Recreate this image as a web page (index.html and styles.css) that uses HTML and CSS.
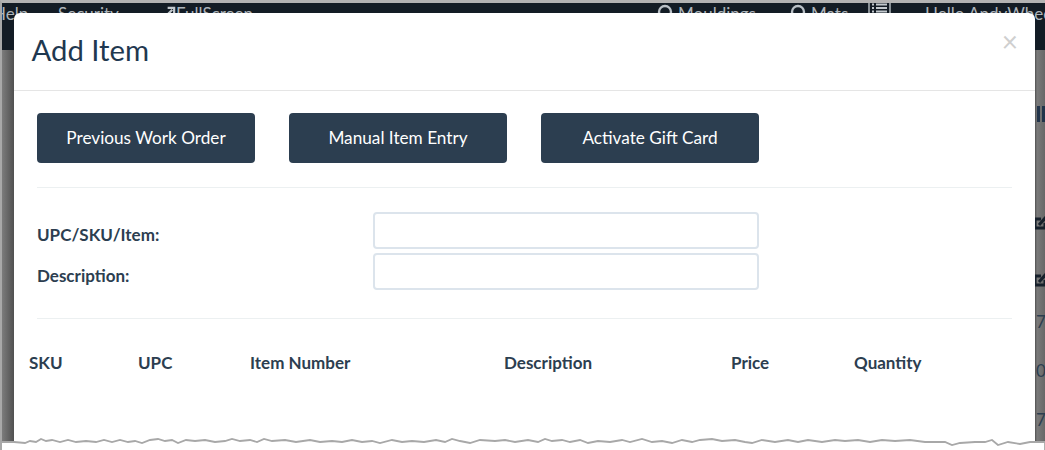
FILE: index.html
```html
<!DOCTYPE html>
<html lang="en">
<head>
<meta charset="utf-8">
<title>Add Item</title>
<link rel="stylesheet" href="styles.css">
</head>
<body>
<div class="stage">
  <header class="navbar">
    <span class="nav-a">Help</span>
    <span class="nav-b">Security</span>
    <span class="nav-c"><svg class="ic" viewBox="0 0 14 14"><path d="M1 13 L10 4 M5 2 H12 V9" fill="none" stroke="#c2c8cd" stroke-width="2.4"/></svg>FullScreen</span>
    <span class="nav-d"><svg class="ic2" viewBox="0 0 18 18"><circle cx="9" cy="8" r="6" fill="none" stroke="#b9c0c6" stroke-width="2.4"/></svg>Mouldings</span>
    <span class="nav-e"><svg class="ic2" viewBox="0 0 18 18"><circle cx="9" cy="8" r="6" fill="none" stroke="#b9c0c6" stroke-width="2.4"/></svg>Mats</span>
    <svg class="nav-f" viewBox="0 0 23 11"><path d="M1 0 V11 M22 0 V11" stroke="#aeb5bb" stroke-width="1.5"/><path d="M4 1.5 H6 M8 1.5 H19 M4 5 H6 M8 5 H19 M4 8.5 H6 M8 8.5 H19" stroke="#c2c8cd" stroke-width="2"/></svg>
    <span class="nav-g">Hello AndyWheeler</span>
  </header>
  <div class="behind">
    <span class="b-bar b-bar-1"></span>
    <span class="b-bar b-bar-2"></span>
    <svg class="b-edit b1" viewBox="0 0 16 16"><path d="M12 8 V13 H2 V4 H8" fill="none" stroke="#16202b" stroke-width="3"/><path d="M6 10 L13 2" stroke="#16202b" stroke-width="3"/></svg>
    <svg class="b-edit b2" viewBox="0 0 16 16"><path d="M12 8 V13 H2 V4 H8" fill="none" stroke="#16202b" stroke-width="3"/><path d="M6 10 L13 2" stroke="#16202b" stroke-width="3"/></svg>
    <span class="b-txt b3">7.</span>
    <span class="b-txt b4">0</span>
    <span class="b-txt b5">7.</span>
  </div>
  <section class="modal">
    <div class="modal-head">
      <h1 class="modal-title">Add Item</h1>
      <span class="close">×</span>
    </div>
    <div class="modal-body">
      <div class="btn-row">
        <button class="btn">Previous Work Order</button>
        <button class="btn">Manual Item Entry</button>
        <button class="btn">Activate Gift Card</button>
      </div>
      <hr class="rule rule-a">
      <div class="field">
        <label class="label">UPC/SKU/Item:</label>
        <input class="input" type="text">
      </div>
      <div class="field field-2">
        <label class="label">Description:</label>
        <input class="input" type="text">
      </div>
      <hr class="rule rule-b">
    </div>
    <div class="thead">
      <span class="th w-sku">SKU</span>
      <span class="th w-upc">UPC</span>
      <span class="th w-num">Item Number</span>
      <span class="th w-desc">Description</span>
      <span class="th w-price">Price</span>
      <span class="th">Quantity</span>
    </div>
  </section>
  <svg class="torn" viewBox="0 0 1045 14" preserveAspectRatio="none">
    <path d="M0 5 L14 5 L25 6 L30 4 L36 5 L41 2 L46 4 L52 3 L60 5 L68 3 L76 5 L86 4 L96 5 L104 3 L112 5 L120 3 L128 5 L135 4 L142 6 L150 3 L158 2 L165 4 L172 3 L178 6 L186 3 L195 4 L205 3 L215 5 L225 4 L232 2 L240 4 L250 3 L257 5 L264 2 L272 4 L285 3 L296 5 L310 3 L320 5 L332 4 L342 5 L352 3 L362 5 L372 4 L380 6 L392 3 L402 5 L412 4 L424 5 L436 3 L445 5 L452 2 L460 4 L470 6 L480 3 L495 4 L505 3 L515 5 L528 3 L538 5 L545 2 L552 4 L562 3 L570 5 L580 3 L588 6 L598 4 L610 5 L622 3 L630 5 L642 2 L652 5 L662 4 L672 6 L682 3 L692 5 L700 3 L712 2 L722 4 L735 3 L745 5 L752 6 L762 3 L775 5 L788 3 L798 5 L808 3 L822 5 L835 3 L845 4 L858 3 L870 5 L882 3 L895 4 L910 3 L925 5 L945 5 L952 8 L960 6 L975 5 L985 5 L992 3 L998 8 L1008 5 L1020 7 L1030 5 L1045 5 V14 H0 Z" fill="#fff" stroke="#a8a8a8" stroke-width="1.8"/>
  </svg>
</div>
</body>
</html>
```
FILE: styles.css
```css
* { box-sizing: border-box; }
html, body { margin: 0; padding: 0; }
body { width: 1045px; height: 450px; overflow: hidden; background: #fff; font-family: Lato, "Liberation Sans", sans-serif; }
.stage { position: relative; width: 1045px; height: 450px; overflow: hidden; background: linear-gradient(90deg, #7c7c7c 0, #505050 12px, #505050 1033px, #7a7a7a 1035px, #636363 1045px); border-top: 3px solid #b3b3b3; border-left: 2px solid #a8a8a8; }
.navbar { height: 47px; background: #131c25; color: #aeb5bb; font-size: 17px; position: relative; }
.navbar span { position: absolute; top: 1px; white-space: nowrap; line-height: 20px; }
.nav-a { left: -9px; }
.nav-b { left: 56px; }
.nav-c { left: 161px; }
.nav-d { left: 654px; }
.nav-e { left: 787px; }
.nav-f { position: absolute; left: 866px; top: 0; width: 23px; height: 11px; }
.nav-g { left: 923px; }
.ic { width: 13px; height: 13px; margin-right: 0; vertical-align: 1px; }
.ic2 { width: 18px; height: 18px; margin-right: 4px; vertical-align: -2px; }
.behind { color: #2c3e50; font-size: 17px; }
.b-bar { position: absolute; top: 103px; width: 3px; height: 16px; background: #22344a; }
.b-bar-1 { left: 1035px; }
.b-bar-2 { left: 1040px; }
.b-edit { position: absolute; left: 1031px; width: 16px; height: 16px; }
.b1 { top: 212px; }
.b2 { top: 269px; }
.b-txt { position: absolute; left: 1034px; }
.b3 { top: 308px; }
.b4 { top: 357px; }
.b5 { top: 406px; }
.modal { position: absolute; left: 12px; top: 10px; width: 1021px; height: 440px; background: #fff; border-radius: 6px 6px 0 0; color: #22344a; }
.modal-head { position: relative; height: 78px; border-bottom: 1px solid #e5e5e5; padding: 17px 17.5px 0; }
.modal-title { margin: 0; font-size: 29.3px; font-weight: 400; line-height: 40px; color: #1f3850; }
.close { position: absolute; right: 17px; top: 14px; font-size: 28px; line-height: 28px; font-weight: 400; color: #cfcfcf; }
.modal-body { padding: 22px 23px 0; }
.btn-row { display: flex; gap: 34px; }
.btn { width: 218px; height: 50px; border: 0; border-radius: 4px; background: #2c3e50; color: #fff; font: 400 17.2px/48px Lato, "Liberation Sans", sans-serif; padding: 0 0 1px; }
.rule { border: 0; border-top: 1px solid #ecf0f1; margin: 0; }
.rule-a { margin-top: 24px; margin-bottom: 24px; }
.rule-b { margin-top: 28px; }
.field { display: flex; align-items: center; height: 37px; }
.field-2 { margin-top: 4px; }
.label { width: 336px; font-size: 17px; font-weight: 700; color: #2c3e50; padding-top: 7px; }
.input { width: 386px; height: 37px; border: 2px solid #dce4ec; border-radius: 4px; background: #fff; }
.thead { display: flex; padding: 34px 0 0 15px; font-size: 17px; font-weight: 700; color: #2c3e50; line-height: 20px; }
.th { display: block; }
.w-sku { width: 109px; }
.w-upc { width: 112px; }
.w-num { width: 254px; }
.w-desc { width: 227px; }
.w-price { width: 123px; }
.torn { position: absolute; left: -2px; top: 434px; width: 1045px; height: 14px; }
```
